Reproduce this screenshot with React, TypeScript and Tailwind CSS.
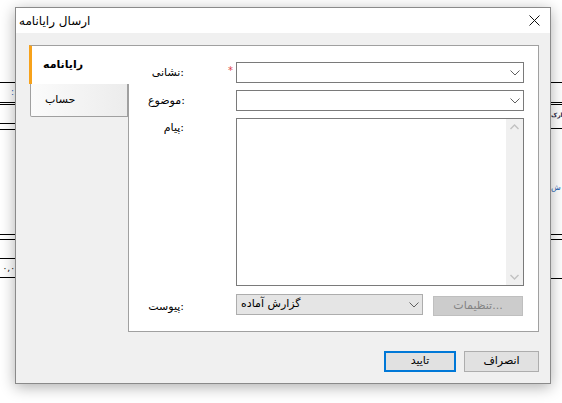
import React from "react";

const Chevron = ({ color = "#606060" }: { color?: string }) => (
  <svg width="10" height="6" viewBox="0 0 10 6" className="block">
    <path d="M0.5 0.5 L5 5 L9.5 0.5" fill="none" stroke={color} strokeWidth="1" />
  </svg>
);

export default function App() {
  return (
    <div className="relative w-[562px] h-[403px] bg-white overflow-hidden font-['DejaVu_Sans',sans-serif] text-[11px] text-black">
      {/* background application content */}
      <div className="flex h-full">
        <div className="w-[15px] flex flex-col">
          <div className="h-px bg-black mt-[82px]" />
          <div className="h-[19px] text-[9px] leading-[19px] text-right text-[#1a5fb4] pr-px">:</div>
          <div className="h-px bg-black" />
          <div className="h-px bg-black mt-[1px]" />
          <div className="h-px bg-black mt-[18px]" />
          <div className="h-px bg-black mt-[5px]" />
          <div className="h-px bg-black mt-[104px]" />
          <div className="h-px bg-black mt-[4px]" />
          <div className="h-px bg-black mt-[18px]" />
          <div className="h-[18px] text-[9px] leading-[18px] text-right whitespace-nowrap">٠,٠</div>
          <div className="h-px bg-black" />
        </div>
        <div className="flex-1" />
        <div className="w-[11px] flex flex-col">
          <div className="h-px bg-black mt-[82px]" />
          <div className="h-px bg-black mt-[19px]" />
          <div className="h-px bg-black mt-[1px]" />
          <div className="h-[23px] text-[6px] font-bold leading-[20px] whitespace-nowrap text-[#1c1c3c] tracking-tighter">ارک</div>
          <div className="h-px bg-black" />
          <div className="h-[105px] text-[8px] leading-[118px] whitespace-nowrap text-[#1a5fb4]">ش</div>
          <div className="h-px bg-black" />
          <div className="h-px bg-black mt-[4px]" />
          <div className="h-px bg-black mt-[38px]" />
        </div>
      </div>

      {/* dialog */}
      <div className="absolute left-[15px] top-[7px] w-[536px] h-[377px] border border-[#8a8a8a] bg-[#f0f0f0] shadow-[0_3px_14px_rgba(0,0,0,0.32)] flex flex-col">
        {/* title bar */}
        <div className="h-[25px] bg-white flex items-center justify-between pl-[3px] pr-[10px]">
          <span dir="rtl" className="text-[12px] leading-none">ارسال رایانامه</span>
          <svg width="11" height="11" viewBox="0 0 11 11" className="block">
            <path d="M0.5 0.5 L10.5 10.5 M10.5 0.5 L0.5 10.5" stroke="#111" strokeWidth="1" />
          </svg>
        </div>

        {/* body */}
        <div className="flex pl-[13px] pt-[12px] pr-[11px]">
          {/* tabs */}
          <div className="w-[100px] -mr-px relative z-10 flex flex-col">
            <div className="h-[39px] bg-white border-t border-l-[3px] border-t-[#a0a0a0] border-l-[#f7a21b] flex items-center pl-[11px]">
              <span dir="rtl" className="font-bold text-[11px]">رایانامه</span>
            </div>
            <div className="ml-px mr-px h-[33px] border border-t-0 border-[#a0a0a0] rounded-bl-[2px] bg-gradient-to-r from-[#fbfbfb] to-[#ececec] flex items-center pl-[14px]">
              <span dir="rtl">حساب</span>
            </div>
          </div>

          {/* panel */}
          <div className="w-[411px] h-[287px] border border-[#a0a0a0] bg-white pt-[16px] pl-[107px] pr-[14px] flex flex-col">
            {/* address */}
            <div className="relative h-[21px] flex">
              <span className="absolute left-[-88px] top-[3px] w-[36px] text-right whitespace-nowrap">نشانی:</span>
              <span className="absolute left-[-8px] top-[1px] text-[#e0404a] text-[10px]">*</span>
              <div className="flex-1 border border-[#7a7a7a] bg-white flex items-center justify-end pr-[3px]">
                <Chevron />
              </div>
            </div>
            {/* subject */}
            <div className="relative h-[21px] mt-[7px] flex">
              <span className="absolute left-[-88px] top-[3px] w-[36px] text-right whitespace-nowrap">موضوع:</span>
              <div className="flex-1 border border-[#7a7a7a] bg-white flex items-center justify-end pr-[3px]">
                <Chevron />
              </div>
            </div>
            {/* message */}
            <div className="relative h-[168px] mt-[7px] flex">
              <span className="absolute left-[-88px] top-[2px] w-[36px] text-right whitespace-nowrap">پیام:</span>
              <div className="flex-1 border border-[#7a7a7a] bg-white flex justify-end">
                <div className="w-[17px] bg-[#f0f0f0] flex flex-col justify-between items-center py-[5px]">
                  <svg width="9" height="6" viewBox="0 0 9 6" className="block">
                    <path d="M0.5 5 L4.5 1 L8.5 5" fill="none" stroke="#c2c2c2" strokeWidth="1.4" />
                  </svg>
                  <svg width="9" height="6" viewBox="0 0 9 6" className="block">
                    <path d="M0.5 1 L4.5 5 L8.5 1" fill="none" stroke="#c2c2c2" strokeWidth="1.4" />
                  </svg>
                </div>
              </div>
            </div>
            {/* attachment */}
            <div className="relative mt-[8px] flex items-start">
              <span className="absolute left-[-88px] top-[5px] w-[36px] text-right whitespace-nowrap">پیوست:</span>
              <div className="w-[187px] h-[21px] border border-[#adadad] bg-[#e5e5e5] flex items-center justify-between pl-[4px] pr-[3px]">
                <span dir="rtl" className="whitespace-nowrap">گزارش آماده</span>
                <Chevron />
              </div>
              <div className="ml-[10px] mt-[2px] w-[90px] h-[20px] border border-[#bfbfbf] bg-[#cccccc] flex items-center justify-center text-[#838383]">
                <span className="whitespace-nowrap">تنظیمات...</span>
              </div>
            </div>
          </div>
        </div>

        {/* footer */}
        <div className="flex justify-end gap-[8px] pr-[11px] mt-[19px]">
          <div className="w-[72px] h-[21px] border-2 border-[#0078d7] bg-[#e1e1e1] flex items-center justify-center">
            <span dir="rtl">تایید</span>
          </div>
          <div className="w-[75px] h-[21px] border border-[#adadad] bg-[#e1e1e1] flex items-center justify-center">
            <span dir="rtl">انصراف</span>
          </div>
        </div>
      </div>
    </div>
  );
}
